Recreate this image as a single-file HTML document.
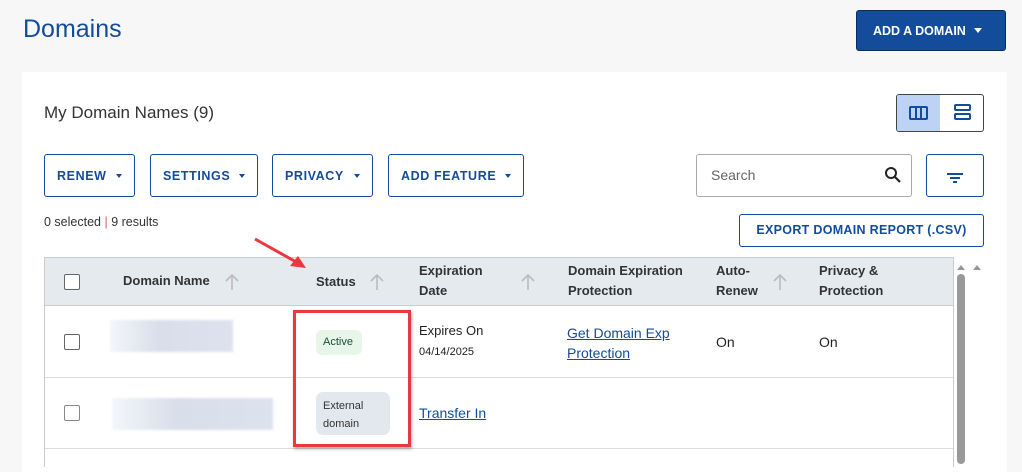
<!DOCTYPE html><html><head><style>
*{box-sizing:border-box;margin:0;padding:0}
body{width:1022px;height:459px;overflow:hidden;background:#f7f7f7;font-family:"Liberation Sans",sans-serif;color:#222;position:relative}
.a{position:absolute}
.btn{position:absolute;border:1px solid #124c9a;border-radius:3px;background:#fff;color:#124c9a;font-weight:bold;font-size:12.5px;letter-spacing:.6px;display:flex;align-items:center;padding-left:12px;height:43px;top:154px}
.btn i{position:absolute;right:12px;top:19px;border:3.5px solid transparent;border-top:4px solid #124c9a}
.th{position:absolute;font-weight:bold;font-size:13px;color:#333;line-height:20px}
.up{position:absolute}
.cb{position:absolute;width:16px;height:16px;border:1.5px solid #666;border-radius:2px;background:#fff}
.blur{position:absolute;background:linear-gradient(90deg,#f4f6fa,#d8deea 40%,#dde3ee);filter:blur(1px)}
a{color:#124c9a;text-decoration:underline}
</style></head><body>
<svg width="0" height="0" style="position:absolute"><defs><symbol id="u" viewBox="0 0 16 18"><path d="M8 17V2M2 8l6-6 6 6" fill="none" stroke="#bbb" stroke-width="1.6"/></symbol></defs></svg>
<div class="a" style="left:23px;top:15px;font-size:25px;color:#124c9a">Domains</div>
<div class="a" style="left:856px;top:10px;width:150px;height:41px;background:#124c9a;border-radius:3px;border:1px solid #0a2d5c;color:#fff;font-weight:bold;font-size:12.5px;display:flex;align-items:center;padding-left:16px">ADD A DOMAIN<span style="margin-left:8px;border:4px solid transparent;border-top:5px solid #fff;margin-top:4px"></span></div>
<div class="a" style="left:22px;top:72px;width:985px;height:400px;background:#fff"></div>
<div class="a" style="left:44px;top:103px;font-size:17px;color:#333">My Domain Names (9)</div>
<div class="a" style="left:896px;top:94px;width:88px;height:38px;border:1px solid #444;border-radius:3px;overflow:hidden;background:#fff">
<div style="position:absolute;left:0;top:0;width:43px;height:36px;background:#bcd3f5"></div>
<div style="position:absolute;left:12px;top:11px;width:19px;height:14px;border:2px solid #124c9a;border-radius:2px;background:linear-gradient(90deg,transparent 4px,#124c9a 4px,#124c9a 6px,transparent 6px,transparent 9px,#124c9a 9px,#124c9a 11px,transparent 11px)"></div>
<div style="position:absolute;left:57px;top:9px;width:17px;height:7px;border:2px solid #124c9a;border-radius:2px"></div>
<div style="position:absolute;left:57px;top:18px;width:17px;height:7px;border:2px solid #124c9a;border-radius:2px"></div>
</div>
<div class="btn" style="left:44px;width:91px">RENEW<i></i></div>
<div class="btn" style="left:150px;width:108px">SETTINGS<i></i></div>
<div class="btn" style="left:272px;width:101px">PRIVACY<i></i></div>
<div class="btn" style="left:388px;width:136px">ADD FEATURE<i></i></div>
<div class="a" style="left:696px;top:154px;width:216px;height:43px;border:1px solid #aaa;border-radius:3px;padding:12px 14px;font-size:14px;color:#666">Search
<svg style="position:absolute;right:9px;top:11px" width="18" height="18" viewBox="0 0 18 18"><circle cx="7" cy="7" r="5" fill="none" stroke="#222" stroke-width="2"/><path d="M11 11l5 5" stroke="#222" stroke-width="2.2"/></svg></div>
<div class="a" style="left:926px;top:154px;width:58px;height:43px;border:1px solid #124c9a;border-radius:3px">
<div style="position:absolute;left:20px;top:18px;width:16px;height:2px;background:#124c9a"></div>
<div style="position:absolute;left:23px;top:22px;width:10px;height:2px;background:#124c9a"></div>
<div style="position:absolute;left:26px;top:26px;width:4px;height:2px;background:#124c9a"></div></div>
<div class="a" style="left:44px;top:215px;font-size:12.5px;color:#333">0 selected <span style="color:#c65">|</span> 9 results</div>
<div class="a" style="left:739px;top:214px;width:245px;height:33px;border:1px solid #124c9a;border-radius:3px;color:#124c9a;font-weight:bold;font-size:12.5px;letter-spacing:.3px;padding:8px 0;text-align:center;white-space:nowrap">EXPORT DOMAIN REPORT (.CSV)</div>
<div class="a" style="left:44px;top:257px;width:910px;height:210px;border:1px solid #ccc;border-bottom:none"></div>
<div class="a" style="left:45px;top:258px;width:908px;height:48px;background:#e5eaef;border-bottom:1px solid #ccc"></div>
<div class="a" style="left:45px;top:377px;width:908px;height:1px;background:#ddd"></div>
<div class="a" style="left:45px;top:448px;width:908px;height:1px;background:#ddd"></div>
<div class="cb" style="left:64px;top:274px"></div>
<div class="th" style="left:123px;top:271px">Domain Name</div><svg class="up" style="left:224px;top:273px" width="16" height="18"><use href="#u"/></svg>
<div class="th" style="left:316px;top:272px">Status</div><svg class="up" style="left:369px;top:273px" width="16" height="18"><use href="#u"/></svg>
<div class="th" style="left:419px;top:261px">Expiration<br>Date</div><svg class="up" style="left:520px;top:273px" width="16" height="18"><use href="#u"/></svg>
<div class="th" style="left:568px;top:261px">Domain Expiration<br>Protection</div>
<div class="th" style="left:716px;top:261px">Auto-<br>Renew</div><svg class="up" style="left:772px;top:273px" width="16" height="18"><use href="#u"/></svg>
<div class="th" style="left:819px;top:261px">Privacy &amp;<br>Protection</div>
<div class="cb" style="left:64px;top:334px"></div>
<div class="cb" style="left:64px;top:405px;border-color:#888"></div>
<div class="blur" style="left:110px;top:320px;width:123px;height:32px"></div>
<div class="blur" style="left:112px;top:398px;width:161px;height:32px"></div>
<div class="a" style="left:316px;top:330px;width:46px;height:25px;background:#e8f6ea;border-radius:6px;font-size:11px;color:#1b4d2b;padding:6px 7px">Active</div>
<div class="a" style="left:316px;top:392px;width:74px;height:43px;background:#e2e8ed;border-radius:7px;font-size:11px;color:#333;padding:5px 7px;line-height:18px">External<br>domain</div>
<div class="a" style="left:419px;top:323px;font-size:13px">Expires On</div>
<div class="a" style="left:419px;top:346px;font-size:11px">04/14/2025</div>
<div class="a" style="left:567px;top:323px;font-size:14px;line-height:20px"><a>Get Domain Exp</a><br><a>Protection</a></div>
<div class="a" style="left:716px;top:334px;font-size:14px">On</div>
<div class="a" style="left:819px;top:334px;font-size:14px">On</div>
<div class="a" style="left:419px;top:405px;font-size:14px"><a>Transfer In</a></div>
<div class="a" style="left:293px;top:310px;width:118px;height:137px;border:3px solid #e9383f;box-shadow:1px 2px 3px rgba(0,0,0,.3)"></div>
<svg class="a" style="left:250px;top:235px" width="60" height="40"><path d="M5 4L48 28" stroke="#e9383f" stroke-width="3"/><path d="M56 33L40 31L48 21Z" fill="#e9383f"/></svg>
<div class="a" style="left:957px;top:261px;border:4px solid transparent;border-bottom:5px solid #999"></div>
<div class="a" style="left:973px;top:261px;border:4px solid transparent;border-bottom:5px solid #999"></div>
<div class="a" style="left:957px;top:274px;width:8px;height:190px;background:#999;border-radius:4px"></div>
</body></html>
